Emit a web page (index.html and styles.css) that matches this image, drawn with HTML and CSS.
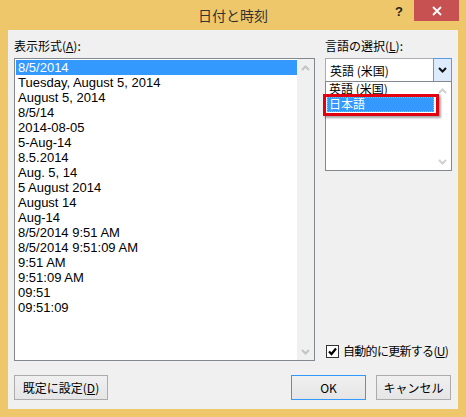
FILE: index.html
```html
<!DOCTYPE html>
<html lang="ja">
<head>
  <meta charset="UTF-8">
  <title>日付と時刻</title>
  <link rel="stylesheet" href="styles.css">
</head>
<body>
  <div class="window">
    <div class="titlebar">
      <div></div>
      <div class="title">日付と時刻</div>
      <div class="controls">
        <span class="help">?</span>
        <span class="close">
          <svg width="10" height="10" viewBox="0 0 10 10"><path d="M1 1 L9 9 M9 1 L1 9" stroke="#fff" stroke-width="1.8"/></svg>
        </span>
      </div>
    </div>

    <div class="client">
      <div class="panes">
        <div class="left">
          <div class="label">表示形式(<u>A</u>):</div>
          <div class="listbox">
            <ul class="items">
              <li class="selected">8/5/2014</li>
              <li>Tuesday, August 5, 2014</li>
              <li>August 5, 2014</li>
              <li>8/5/14</li>
              <li>2014-08-05</li>
              <li>5-Aug-14</li>
              <li>8.5.2014</li>
              <li>Aug. 5, 14</li>
              <li>5 August 2014</li>
              <li>August 14</li>
              <li>Aug-14</li>
              <li>8/5/2014 9:51 AM</li>
              <li>8/5/2014 9:51:09 AM</li>
              <li>9:51 AM</li>
              <li>9:51:09 AM</li>
              <li>09:51</li>
              <li>09:51:09</li>
            </ul>
            <div class="scrollbar">
              <span class="arrow"><svg width="9" height="6" viewBox="0 0 9 6"><path d="M1 5 L4.5 1.5 L8 5" fill="none" stroke="#c4c4c4" stroke-width="2"/></svg></span>
              <span class="arrow"><svg width="9" height="6" viewBox="0 0 9 6"><path d="M1 1 L4.5 4.5 L8 1" fill="none" stroke="#c4c4c4" stroke-width="2"/></svg></span>
            </div>
          </div>
        </div>

        <div class="right">
          <div class="label">言語の選択(<u>L</u>):</div>
          <div class="combo">
            <span class="combo-text">英語 (米国)</span>
            <span class="drop">
              <svg width="9" height="6" viewBox="0 0 9 6"><path d="M1 1 L4.5 4.5 L8 1" fill="none" stroke="#111" stroke-width="2"/></svg>
            </span>
          </div>
          <div class="droplist">
            <ul class="options">
              <li>英語 (米国)</li>
              <li class="selected marked">日本語</li>
            </ul>
            <div class="scrollbar">
              <span class="arrow"><svg width="9" height="6" viewBox="0 0 9 6"><path d="M1 5 L4.5 1.5 L8 5" fill="none" stroke="#d0d0d0" stroke-width="2"/></svg></span>
              <span class="arrow"><svg width="9" height="6" viewBox="0 0 9 6"><path d="M1 1 L4.5 4.5 L8 1" fill="none" stroke="#d0d0d0" stroke-width="2"/></svg></span>
            </div>
          </div>
          <div class="check">
            <span class="box">
              <svg width="11" height="11" viewBox="0 0 11 11"><path d="M2 5.5 L4.5 8 L9 2.5" fill="none" stroke="#000" stroke-width="2.2"/></svg>
            </span>
            <span class="check-text">自動的に更新する(<u>U</u>)</span>
          </div>
        </div>
      </div>

      <div class="buttons">
        <button class="btn wide">既定に設定(<u>D</u>)</button>
        <div class="spacer"></div>
        <button class="btn default">OK</button>
        <button class="btn">キャンセル</button>
      </div>
    </div>
  </div>
</body>
</html>
```

FILE: styles.css
```css
body {
  margin: 0;
}

.window {
  width: 466px;
  height: 417px;
  background-color: #EFC76B;
  display: flex;
  flex-direction: column;
  font-family: "Noto Sans CJK JP", sans-serif;
  font-size: 12px;
  color: #000;
}

.titlebar {
  height: 30px;
  display: grid;
  grid-template-columns: 1fr auto 1fr;
}

.title {
  font-size: 14px;
  line-height: 30px;
  color: #333;
}

.controls {
  display: flex;
  justify-content: flex-end;
  align-items: flex-start;
  padding-right: 7px;
}

.help {
  font-family: "Liberation Sans", sans-serif;
  font-weight: bold;
  font-size: 13px;
  line-height: 14px;
  margin: 5px 11px 0 0;
  color: #222;
}

.close {
  width: 45px;
  height: 21px;
  background-color: #C75050;
  display: flex;
  align-items: center;
  justify-content: center;
}

.client {
  flex: 1;
  margin: 0 8px 8px;
  background-color: #F0F0F0;
  padding: 8px 6px 9px;
  display: flex;
  flex-direction: column;
}

.panes {
  display: flex;
  gap: 10px;
}

.left {
  width: 301px;
}

.right {
  width: 127px;
  display: flex;
  flex-direction: column;
}

.label {
  line-height: 16px;
  margin-bottom: 4px;
}

ul {
  list-style: none;
  margin: 0;
  padding: 0;
}

.listbox {
  height: 303px;
  box-sizing: border-box;
  border: 1px solid #828790;
  background-color: #fff;
  display: flex;
  padding: 1px 0 1px 1px;
}

.items {
  flex: 1;
  font-family: "Liberation Sans", sans-serif;
  font-size: 13px;
}

.items li {
  height: 15px;
  line-height: 15px;
  padding-left: 2px;
  white-space: nowrap;
}

.selected {
  background-color: #3399FF;
  color: #fff;
}

.scrollbar {
  width: 17px;
  background-color: #F0F0F0;
  display: flex;
  flex-direction: column;
  justify-content: space-between;
}

.listbox .scrollbar {
  margin: -1px 0;
}

.arrow {
  height: 17px;
  display: flex;
  align-items: center;
  justify-content: center;
}

.combo {
  height: 24px;
  box-sizing: border-box;
  border: 1px solid #ABADB3;
  background-color: #fff;
  display: flex;
  align-items: center;
}

.combo-text {
  flex: 1;
  padding-left: 4px;
}

.drop {
  width: 17px;
  align-self: stretch;
  margin: -1px -1px -1px 0;
  border: 1px solid #569DE5;
  background-color: #DCECFC;
  display: flex;
  align-items: center;
  justify-content: center;
}

.droplist {
  height: 90px;
  margin-top: -1px;
  box-sizing: border-box;
  border: 1px solid #828790;
  background-color: #fff;
  display: flex;
  padding-left: 1px;
}

.options {
  flex: 1;
}

.options li {
  height: 15px;
  line-height: 14px;
  padding-left: 2px;
}

.marked {
  position: relative;
  outline: 1px dotted #E9B24C;
  outline-offset: -1px;
}

.marked::after {
  content: "";
  position: absolute;
  left: -4px;
  right: -5px;
  top: -3px;
  bottom: -4px;
  border: 3px solid #E3000F;
  box-shadow: 2px 2px 2px rgba(0, 0, 0, 0.35);
}

.droplist .scrollbar {
  background-color: #fff;
}

.check {
  margin-top: auto;
  margin-bottom: 2px;
  display: flex;
  align-items: center;
  gap: 4px;
  line-height: 16px;
  padding-left: 1px;
  white-space: nowrap;
}

.check-text {
  letter-spacing: -0.7px;
}

.box {
  width: 13px;
  height: 13px;
  flex-shrink: 0;
  box-sizing: border-box;
  border: 1px solid #333;
  background-color: #fff;
  display: flex;
  align-items: center;
  justify-content: center;
}

.buttons {
  margin-top: 14px;
  display: flex;
  gap: 10px;
  padding-right: 1px;
}

.spacer {
  flex: 1;
}

.btn {
  width: 75px;
  height: 25px;
  border: 1px solid #ACACAC;
  background: linear-gradient(#F0F0F0, #E5E5E5);
  font-family: "Noto Sans CJK JP", sans-serif;
  font-size: 12px;
  color: #000;
  padding: 0;
}

.btn.wide {
  width: 94px;
}

.btn.default {
  border-color: #3399FF;
}
```
